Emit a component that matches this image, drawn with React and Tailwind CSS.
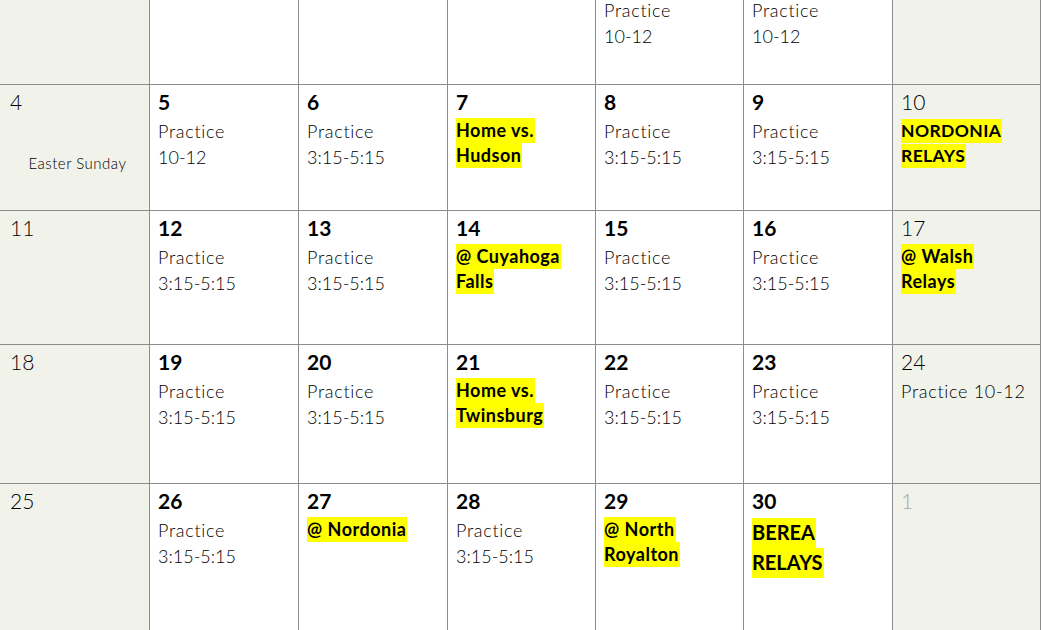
import React from "react";

const weeks = [
  {
    h: "h-[85px]",
    first: true,
    days: [
      {},
      {},
      {},
      {},
      { items: [{ t: "plain", lines: ["Practice", "10-12"] }] },
      { items: [{ t: "plain", lines: ["Practice", "10-12"] }] },
      {},
    ],
  },
  {
    h: "h-[126px]",
    days: [
      { n: "4", items: [{ t: "small", lines: ["Easter Sunday"] }] },
      { n: "5", bold: true, items: [{ t: "plain", lines: ["Practice", "10-12"] }] },
      { n: "6", bold: true, items: [{ t: "plain", lines: ["Practice", "3:15-5:15"] }] },
      { n: "7", bold: true, items: [{ t: "hl", lines: ["Home vs.", "Hudson"] }] },
      { n: "8", bold: true, items: [{ t: "plain", lines: ["Practice", "3:15-5:15"] }] },
      { n: "9", bold: true, items: [{ t: "plain", lines: ["Practice", "3:15-5:15"] }] },
      { n: "10", items: [{ t: "hl", lines: ["NORDONIA", "RELAYS"], caps: true }] },
    ],
  },
  {
    h: "h-[134px]",
    days: [
      { n: "11" },
      { n: "12", bold: true, items: [{ t: "plain", lines: ["Practice", "3:15-5:15"] }] },
      { n: "13", bold: true, items: [{ t: "plain", lines: ["Practice", "3:15-5:15"] }] },
      { n: "14", bold: true, items: [{ t: "hl", lines: ["@ Cuyahoga", "Falls"] }] },
      { n: "15", bold: true, items: [{ t: "plain", lines: ["Practice", "3:15-5:15"] }] },
      { n: "16", bold: true, items: [{ t: "plain", lines: ["Practice", "3:15-5:15"] }] },
      { n: "17", items: [{ t: "hl", lines: ["@ Walsh", "Relays"] }] },
    ],
  },
  {
    h: "h-[139px]",
    days: [
      { n: "18" },
      { n: "19", bold: true, items: [{ t: "plain", lines: ["Practice", "3:15-5:15"] }] },
      { n: "20", bold: true, items: [{ t: "plain", lines: ["Practice", "3:15-5:15"] }] },
      { n: "21", bold: true, items: [{ t: "hl", lines: ["Home vs.", "Twinsburg"] }] },
      { n: "22", bold: true, items: [{ t: "plain", lines: ["Practice", "3:15-5:15"] }] },
      { n: "23", bold: true, items: [{ t: "plain", lines: ["Practice", "3:15-5:15"] }] },
      { n: "24", items: [{ t: "plain", lines: ["Practice 10-12"] }] },
    ],
  },
  {
    h: "h-[170px]",
    days: [
      { n: "25" },
      { n: "26", bold: true, items: [{ t: "plain", lines: ["Practice", "3:15-5:15"] }] },
      { n: "27", bold: true, items: [{ t: "hl", lines: ["@ Nordonia"] }] },
      { n: "28", bold: true, items: [{ t: "plain", lines: ["Practice", "3:15-5:15"] }] },
      { n: "29", bold: true, items: [{ t: "hl", lines: ["@ North", "Royalton"] }] },
      { n: "30", bold: true, items: [{ t: "big", lines: ["BEREA", "RELAYS"] }] },
      { n: "1", muted: true },
    ],
  },
];

const colW = ["w-[150px]", "w-[149px]", "w-[149px]", "w-[148px]", "w-[148px]", "w-[149px]", "w-[148px]"];

function Item({ item, first }) {
  if (item.t === "small") {
    return (
      <div className="mt-[36px] text-center text-[15px] leading-[20px] font-light tracking-[0.5px] text-black pr-1">
        {item.lines[0]}
      </div>
    );
  }
  if (item.t === "plain") {
    return (
      <div className={`${first ? "-mt-[3px]" : "mt-[1px]"} text-[18px] leading-[26px] text-black font-light`}>
        {item.lines.map((l, i) => (
          <div key={i} className={l.startsWith("Practice") ? "tracking-[0.7px]" : ""}>
            {l}
          </div>
        ))}
      </div>
    );
  }
  const big = item.t === "big";
  let cls = "text-[18px] leading-[25px] font-bold text-black tracking-[0.5px]";
  if (item.caps) cls = "text-[17.5px] leading-[25px] font-bold text-black tracking-[0.4px]";
  if (big) cls = "mt-[1px] text-[20px] leading-[30px] font-bold tracking-[0px] text-black";
  return (
    <div className={cls}>
      {item.lines.map((l, i) => (
        <div key={i}>
          <span
            className={
              big ? "bg-[#ffff00] pt-[2px] pb-[4px] pr-[1px]" : "bg-[#ffff00] pt-[0.5px] pb-[3px] pr-[1px]"
            }
          >
            {l}
          </span>
        </div>
      ))}
    </div>
  );
}

function Day({ d, i, first }) {
  const weekend = i === 0 || i === 6;
  return (
    <div
      className={`${colW[i]} shrink-0 h-full border-r border-b border-[#8c8c8c] ${i === 0 ? "pl-[10px]" : "pl-2"} ${
        first ? "pt-0" : "pt-[2px]"
      } ${weekend ? "bg-[#f1f3eb]" : "bg-white"}`}
    >
      {d.n && (
        <div
          className={`text-[21px] leading-[30px] ${
            d.muted ? "text-[#a6a6a6] font-light" : d.bold ? "font-bold text-black" : "font-light text-black"
          }`}
        >
          {d.n}
        </div>
      )}
      {(d.items || []).map((it, k) => (
        <Item key={k} item={it} first={first} />
      ))}
    </div>
  );
}

export default function App() {
  return (
    <div className="w-[1041px] h-[630px] overflow-hidden bg-white font-['Lato','Open_Sans',sans-serif]">
      {weeks.map((w, r) => (
        <div key={r} className={`flex ${w.h}`}>
          {w.days.map((d, i) => (
            <Day key={i} d={d} i={i} first={w.first} />
          ))}
        </div>
      ))}
    </div>
  );
}
